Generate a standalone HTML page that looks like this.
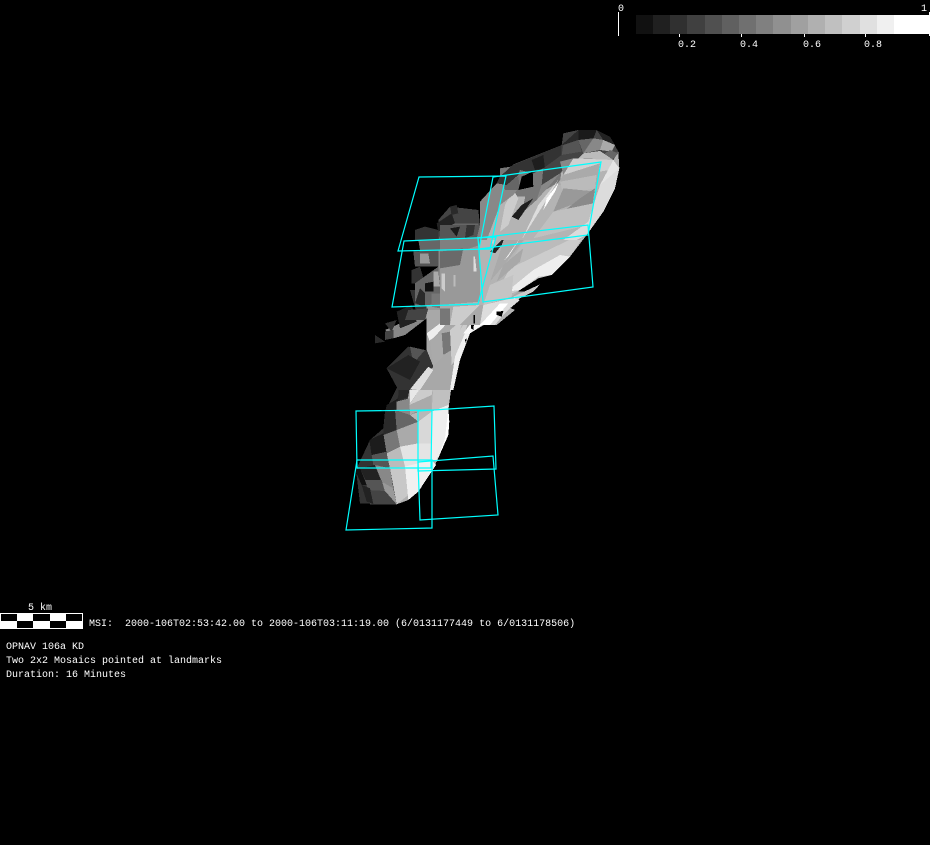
<!DOCTYPE html>
<html><head><meta charset="utf-8"><style>
html,body{margin:0;padding:0;background:#000;width:930px;height:845px;overflow:hidden}
svg{position:absolute;left:0;top:0}
text{font-family:"Liberation Mono",monospace;font-size:10px;fill:#fff}
</style></head><body>
<svg width="930" height="845" viewBox="0 0 930 845" shape-rendering="crispEdges">
<!-- lower lobe -->
<g transform="translate(350,385) scale(.33333)">
<polygon fill="#b0b0b0" points="145,0 305,0 295,60 295,150 255,240 205,320 175,345 140,358 30,355 18,255 60,165 100,130 105,80"/>
<polygon fill="#333" points="18,255 60,165 100,130 105,80 145,0 180,0 150,185 120,250 140,358 30,355"/>
<polygon fill="#262626" points="145,0 180,0 175,35 140,50 145,30"/>
<polygon fill="#e8e8e8" points="180,0 218,0 180,55"/>
<polygon fill="#ccc" points="218,0 250,0 245,30 178,60"/>
<polygon fill="#c0c0c0" points="250,0 305,0 295,75 245,80"/>
<polygon fill="#aaa" points="178,60 245,30 245,75 205,80 180,90 140,80 140,50"/>
<polygon fill="#2a2a2a" points="105,80 140,70 140,145 100,150"/>
<polygon fill="#1e1e1e" points="110,60 145,40 140,72 105,82"/>
<polygon fill="#888" points="140,50 178,40 180,90 140,80"/>
<polygon fill="#666" points="135,75 180,90 200,80 205,110 140,135"/>
<polygon fill="#b8b8b8" points="180,90 205,80 245,75 245,130 205,135 205,110"/>
<polygon fill="#777" points="100,150 140,135 150,185 110,205"/>
<polygon fill="#1c1c1c" points="58,165 100,145 110,205 65,212"/>
<polygon fill="#aaa" points="140,135 205,110 205,185 150,185"/>
<polygon fill="#d8d8d8" points="205,110 245,80 250,130 245,175 205,175"/>
<polygon fill="#eee" points="245,80 295,60 295,150 260,225 245,225"/>
<polygon fill="#fff" points="295,70 298,110 295,150 258,235 285,160"/>
<polygon fill="#555" points="65,210 110,200 120,250 70,240"/>
<polygon fill="#bbb" points="110,205 150,185 165,245 120,250"/>
<polygon fill="#e4e4e4" points="150,185 205,175 245,175 245,225 165,245"/>
<polygon fill="#c8c8c8" points="120,250 165,245 175,330 140,358 130,300"/>
<polygon fill="#f0f0f0" points="165,245 245,225 258,240 205,320 175,345"/>
<polygon fill="#888" points="75,240 120,250 130,310 95,290"/>
<polygon fill="#999" points="95,290 130,310 140,358 105,320"/>
<polygon fill="#222" points="30,250 75,240 95,290 50,290"/>
<polygon fill="#111" points="15,255 30,250 50,300 35,300"/>
<polygon fill="#555" points="45,285 95,285 105,320 55,315"/>
<polygon fill="#444" points="50,315 105,318 140,358 60,358"/>
<polygon fill="#222" points="35,300 60,310 70,357 50,350"/>
</g>
<!-- neck -->
<g transform="translate(370,290) scale(.33333)">
<polygon fill="#a8a8a8" points="165,60 300,0 470,5 400,70 300,130 270,210 250,300 90,300 190,230 170,180"/>
<polygon fill="#000" points="125,100 170,85 170,175 140,175 110,140"/>
<polygon fill="#888" points="45,120 170,65 170,85 105,135 70,145"/>
<polygon fill="#2a2a2a" points="15,135 45,155 15,160"/>
<polygon fill="#333" points="45,100 80,90 65,125"/>
<polygon fill="#222" points="80,65 125,45 140,95 90,115"/>
<polygon fill="#444" points="45,125 70,120 70,145 45,150"/>
<polygon fill="#333" points="120,0 165,0 170,60 140,70"/>
<polygon fill="#333" points="50,235 115,170 140,180 170,180 190,230 125,300 85,300"/>
<polygon fill="#555" points="120,170 165,180 130,220"/>
<polygon fill="#222" points="115,195 150,215 120,270 50,235"/>
<polygon fill="#eee" points="170,130 250,70 240,90 180,155"/>
<polygon fill="#ddd" points="120,298 175,230 190,240 150,300"/>
<polygon fill="#777" points="215,130 240,125 245,180 220,195"/>
<polygon fill="#aaa" points="180,150 215,130 220,200 190,230"/>
<polygon fill="#ccc" points="240,120 300,70 270,190 245,225"/>
<polygon fill="#f0f0f0" points="300,130 270,210 250,300 240,300 255,200 285,130"/>
<polygon fill="#999" points="170,0 330,0 300,60 170,60"/>
<polygon fill="#777" points="220,0 250,0 250,40 215,40"/>
<polygon fill="#bbb" points="310,0 370,0 290,90 270,120"/>
<polygon fill="#f8f8f8" points="280,130 340,50 420,30 470,5 400,70 330,110 300,130"/>
<polygon fill="#000" points="305,75 315,75 310,120 303,115"/>
<polygon fill="#000" points="360,100 385,85 360,115 350,110"/>
<polygon fill="#000" points="385,65 405,70 390,85"/>
<polygon fill="#000" points="340,130 350,125 345,135"/>
<polygon fill="#000" points="285,150 290,145 288,160"/>
</g>
<!-- mottled region -->
<g transform="translate(395,200) scale(.33333)">
<polygon fill="#444" points="130,60 165,20 250,30 260,120 130,120"/>
<polygon fill="#666" points="150,70 250,70 250,120 130,120"/>
<polygon fill="#222" points="125,70 170,40 180,70 130,95"/>
<polygon fill="#333" points="60,90 90,80 130,90 130,120 60,120"/>
<polygon fill="#2a2a2a" points="165,20 185,15 190,40 170,45"/>
<polygon fill="#666" points="70,120 250,115 250,150 75,150"/>
<polygon fill="#555" points="55,155 130,150 130,200 60,200"/>
<polygon fill="#999" points="75,160 100,160 105,190 75,190"/>
<polygon fill="#888" points="130,150 250,145 250,320 130,320"/>
<polygon fill="#a0a0a0" points="150,190 250,150 250,250 170,250"/>
<polygon fill="#333" points="50,210 75,200 90,250 50,250"/>
<polygon fill="#666" points="60,250 130,200 140,310 60,320"/>
<polygon fill="#111" points="90,250 115,245 115,275 90,275"/>
<polygon fill="#aaa" points="115,215 130,215 135,260 115,260"/>
<polygon fill="#2a2a2a" points="75,265 90,280 90,320 60,310"/>
<polygon fill="#777" points="110,280 135,280 135,325 110,320"/>
<polygon fill="#ddd" points="175,255 180,255 180,300 175,300"/>
<polygon fill="#444" points="40,330 100,325 90,360 30,360"/>
<polygon fill="#bbb" points="160,320 240,320 230,360 170,360"/>
<polygon fill="#444" points="135,320 170,320 160,345 140,350"/>
</g>
<!-- middle -->
<g transform="translate(440,225) scale(.33333)">
<polygon fill="#b4b4b4" points="0,0 440,0 440,30 390,95 335,150 295,160 240,195 215,215 190,240 225,255 170,300 0,300"/>
<polygon fill="#808080" points="0,0 120,0 120,230 0,240"/>
<polygon fill="#999" points="0,100 120,60 120,230 0,240"/>
<polygon fill="#6a6a6a" points="0,80 70,70 60,120 0,130"/>
<polygon fill="#555" points="0,0 120,0 110,40 0,45"/>
<polygon fill="#333" points="80,0 105,0 100,30 75,40"/>
<polygon fill="#1a1a1a" points="30,10 60,5 50,35"/>
<polygon fill="#ccc" points="5,145 15,145 15,200 5,190"/>
<polygon fill="#bbb" points="40,150 46,150 46,185 40,185"/>
<polygon fill="#ddd" points="100,95 105,95 110,140 100,140"/>
<polygon fill="#aaa" points="195,35 270,20 200,110 150,170"/>
<polygon fill="#bbb" points="270,20 440,0 440,30 210,130 170,170"/>
<polygon fill="#ccc" points="210,130 440,20 390,95 335,150 295,160 240,195 180,220 170,200"/>
<polygon fill="#a8a8a8" points="190,120 250,70 240,110 170,170"/>
<polygon fill="#eee" points="240,195 295,155 335,150 390,95 360,90 280,135 200,200"/>
<polygon fill="#222" points="150,80 195,35 185,60 165,85"/>
<polygon fill="#ccc" points="150,40 175,0 190,0 160,60"/>
<polygon fill="#eee" points="190,110 240,40 250,25 205,95"/>
<polygon fill="#c4c4c4" points="130,240 150,180 220,150 215,215"/>
<polygon fill="#aaa" points="0,240 130,240 120,300 0,300"/>
<polygon fill="#777" points="0,250 30,250 30,300 0,300"/>
<polygon fill="#ccc" points="40,245 120,240 60,300 30,300"/>
<polygon fill="#ccc" points="220,215 300,178 280,200 230,225"/>
<polygon fill="#ddd" points="130,240 215,220 240,225 210,250 185,275 165,300 120,300"/>
<polygon fill="#fff" points="120,300 180,235 205,235 150,300"/>
<polygon fill="#000" points="170,260 190,258 185,275 170,270"/>
<polygon fill="#000" points="100,270 105,270 105,295 100,295"/>
</g>
<!-- upper lobe -->
<g transform="translate(480,125) scale(.33333)">
<polygon fill="#b4b4b4" points="0,345 0,230 50,175 100,118 245,60 250,25 295,15 350,15 390,35 415,80 418,130 405,190 370,260 320,330 300,345"/>
<polygon fill="#444" points="100,118 245,60 250,25 295,15 350,15 390,35 415,80 400,105 280,105 190,135 120,140"/>
<polygon fill="#777" points="60,130 250,100 240,170 160,215 60,215"/>
<polygon fill="#2a2a2a" points="245,60 295,15 295,45 250,60"/>
<polygon fill="#1a1a1a" points="295,15 350,15 340,40 295,45"/>
<polygon fill="#222" points="350,15 390,35 405,60 370,45"/>
<polygon fill="#555" points="250,60 295,45 305,80 245,90"/>
<polygon fill="#666" points="295,45 340,40 310,85"/>
<polygon fill="#888" points="340,40 370,45 360,75 310,85"/>
<polygon fill="#aaa" points="370,45 405,60 395,80 360,75"/>
<polygon fill="#666" points="390,75 415,85 395,105 360,95"/>
<polygon fill="#bbb" points="310,85 360,78 400,105 280,115"/>
<polygon fill="#333" points="100,120 245,60 245,95 190,130 160,145 120,135"/>
<polygon fill="#1e1e1e" points="155,105 190,90 195,130 165,135"/>
<polygon fill="#444" points="190,130 245,90 280,100 240,145 185,180"/>
<polygon fill="#888" points="240,110 280,100 340,100 250,150"/>
<polygon fill="#d0d0d0" points="280,100 400,105 418,130 300,150 250,150"/>
<polygon fill="#aaa" points="250,150 360,115 350,180 230,180"/>
<polygon fill="#888" points="185,180 240,145 210,180 170,225"/>
<polygon fill="#e4e4e4" points="400,105 418,130 405,190 370,260 340,260 360,180"/>
<polygon fill="#bbb" points="240,170 350,150 345,190 250,210"/>
<polygon fill="#999" points="250,190 350,200 300,230 220,260"/>
<polygon fill="#8a8a8a" points="300,220 345,190 330,290 200,300"/>
<polygon fill="#c0c0c0" points="220,260 340,235 325,300 160,340"/>
<polygon fill="#ddd" points="235,165 190,240 140,320 125,345 175,240"/>
<polygon fill="#fff" points="235,175 225,200 190,255 200,220"/>
<polygon fill="#dcdcdc" points="360,180 418,130 405,190 370,260 320,330 290,345 250,345 325,290"/>
<polygon fill="#777" points="140,195 185,180 170,225 125,265"/>
<polygon fill="#1e1e1e" points="95,275 125,240 160,220 115,285"/>
<polygon fill="#ccc" points="75,240 100,195 115,220 85,300 60,320"/>
<polygon fill="#888" points="0,230 50,175 80,180 115,190 100,210 60,240 20,345 0,345"/>
<polygon fill="#666" points="70,175 115,155 120,195 75,195"/>
<polygon fill="#333" points="60,155 100,118 120,135 115,150 80,180 50,175"/>
<polygon fill="#000" points="115,195 125,155 158,140 160,185"/>
</g>
<g fill="none" stroke="#0ff" stroke-width="1.2" shape-rendering="auto">
<polygon points="419,177 506,176 490,249 398,251"/>
<polygon points="493,177 601,162 588,235 479,249"/>
<polygon points="404,241 496,237 478,304 392,307"/>
<polygon points="478,238 588,225 593,287 483,302"/>
<polygon points="356,411 432,410 431,468 357,468"/>
<polygon points="418,411 494,406 496,469 418,471"/>
<polygon points="357,460 432,460 432,528 346,530"/>
<polygon points="418,462 493,456 498,515 420,520"/>
</g>
<!-- colour bar -->
<g>
<rect x="636" y="15" width="17" height="19" fill="#111"/>
<rect x="653" y="15" width="17" height="19" fill="#202020"/>
<rect x="670" y="15" width="17" height="19" fill="#303030"/>
<rect x="687" y="15" width="18" height="19" fill="#404040"/>
<rect x="705" y="15" width="17" height="19" fill="#505050"/>
<rect x="722" y="15" width="17" height="19" fill="#606060"/>
<rect x="739" y="15" width="17" height="19" fill="#707070"/>
<rect x="756" y="15" width="17" height="19" fill="#808080"/>
<rect x="773" y="15" width="18" height="19" fill="#909090"/>
<rect x="791" y="15" width="17" height="19" fill="#a0a0a0"/>
<rect x="808" y="15" width="17" height="19" fill="#b0b0b0"/>
<rect x="825" y="15" width="17" height="19" fill="#c0c0c0"/>
<rect x="842" y="15" width="18" height="19" fill="#d0d0d0"/>
<rect x="860" y="15" width="17" height="19" fill="#e0e0e0"/>
<rect x="877" y="15" width="17" height="19" fill="#f0f0f0"/>
<rect x="894" y="15" width="35" height="19" fill="#fff"/>
<rect x="618" y="12" width="1" height="24" fill="#fff"/>
<rect x="929" y="12" width="1" height="24" fill="#fff"/>
<rect x="679" y="34" width="1" height="3" fill="#fff"/>
<rect x="741" y="34" width="1" height="3" fill="#fff"/>
<rect x="804" y="34" width="1" height="3" fill="#fff"/>
<rect x="865" y="34" width="1" height="3" fill="#fff"/>
</g>
<!-- scale bar -->
<rect x="0" y="613" width="83" height="16" fill="#fff"/>
<g fill="#000">
<rect x="1" y="614" width="16" height="7"/><rect x="33" y="614" width="17" height="7"/><rect x="66" y="614" width="16" height="7"/>
<rect x="17" y="621" width="16" height="7"/><rect x="50" y="621" width="16" height="7"/>
</g>
<text x="618" y="11">0</text>
<text x="921" y="11">1</text>
<text x="678" y="47">0.2</text>
<text x="740" y="47">0.4</text>
<text x="803" y="47">0.6</text>
<text x="864" y="47">0.8</text>
<text x="28" y="610">5 km</text>
<text x="89" y="626" xml:space="preserve">MSI:  2000-106T02:53:42.00 to 2000-106T03:11:19.00 (6/0131177449 to 6/0131178506)</text>
<text x="6" y="649">OPNAV 106a KD</text>
<text x="6" y="663">Two 2x2 Mosaics pointed at landmarks</text>
<text x="6" y="677">Duration: 16 Minutes</text>
</svg>
</body></html>
